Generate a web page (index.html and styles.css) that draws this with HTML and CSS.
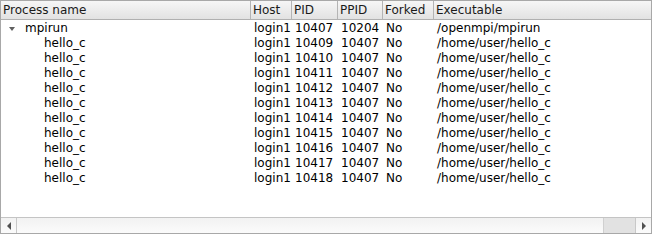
FILE: index.html
```html
<!DOCTYPE html>
<html>
<head>
<meta charset="utf-8">
<link rel="stylesheet" href="styles.css">
</head>
<body>
<div class="view">
  <div class="header">
    <div class="hcell c1">Process name</div>
    <div class="hcell c2">Host</div>
    <div class="hcell c3">PID</div>
    <div class="hcell c4">PPID</div>
    <div class="hcell c5">Forked</div>
    <div class="hcell c6">Executable</div>
  </div>
  <div class="body">
    <div class="row">
      <div class="cell c1"><span class="arrow"></span><span class="name">mpirun</span></div>
      <div class="cell c2">login1</div><div class="cell c3">10407</div><div class="cell c4">10204</div><div class="cell c5">No</div><div class="cell c6">/openmpi/mpirun</div>
    </div>
    <div class="row"><div class="cell c1 child">hello_c</div><div class="cell c2">login1</div><div class="cell c3">10409</div><div class="cell c4">10407</div><div class="cell c5">No</div><div class="cell c6">/home/user/hello_c</div></div>
    <div class="row"><div class="cell c1 child">hello_c</div><div class="cell c2">login1</div><div class="cell c3">10410</div><div class="cell c4">10407</div><div class="cell c5">No</div><div class="cell c6">/home/user/hello_c</div></div>
    <div class="row"><div class="cell c1 child">hello_c</div><div class="cell c2">login1</div><div class="cell c3">10411</div><div class="cell c4">10407</div><div class="cell c5">No</div><div class="cell c6">/home/user/hello_c</div></div>
    <div class="row"><div class="cell c1 child">hello_c</div><div class="cell c2">login1</div><div class="cell c3">10412</div><div class="cell c4">10407</div><div class="cell c5">No</div><div class="cell c6">/home/user/hello_c</div></div>
    <div class="row"><div class="cell c1 child">hello_c</div><div class="cell c2">login1</div><div class="cell c3">10413</div><div class="cell c4">10407</div><div class="cell c5">No</div><div class="cell c6">/home/user/hello_c</div></div>
    <div class="row"><div class="cell c1 child">hello_c</div><div class="cell c2">login1</div><div class="cell c3">10414</div><div class="cell c4">10407</div><div class="cell c5">No</div><div class="cell c6">/home/user/hello_c</div></div>
    <div class="row"><div class="cell c1 child">hello_c</div><div class="cell c2">login1</div><div class="cell c3">10415</div><div class="cell c4">10407</div><div class="cell c5">No</div><div class="cell c6">/home/user/hello_c</div></div>
    <div class="row"><div class="cell c1 child">hello_c</div><div class="cell c2">login1</div><div class="cell c3">10416</div><div class="cell c4">10407</div><div class="cell c5">No</div><div class="cell c6">/home/user/hello_c</div></div>
    <div class="row"><div class="cell c1 child">hello_c</div><div class="cell c2">login1</div><div class="cell c3">10417</div><div class="cell c4">10407</div><div class="cell c5">No</div><div class="cell c6">/home/user/hello_c</div></div>
    <div class="row"><div class="cell c1 child">hello_c</div><div class="cell c2">login1</div><div class="cell c3">10418</div><div class="cell c4">10407</div><div class="cell c5">No</div><div class="cell c6">/home/user/hello_c</div></div>
  </div>
  <div class="hscroll">
    <div class="sbtn left"><span class="tri-left"></span></div>
    <div class="track"><div class="thumb"></div></div>
    <div class="sbtn right"><span class="tri-right"></span></div>
  </div>
</div>
</body>
</html>
```

FILE: styles.css
```css
html, body { margin: 0; padding: 0; background: #ffffff; }
body { font-family: "DejaVu Sans", sans-serif; font-size: 12px; color: #000; }
.view {
  width: 652px; height: 234px; box-sizing: border-box;
  border: 1px solid #a8a8a8;
  display: flex; flex-direction: column; background: #fff;
}
.header {
  display: flex; height: 19px; box-sizing: border-box;
  background: linear-gradient(#f6f6f6, #e2e2e2);
  border-bottom: 1px solid #b0b0b0;
}
.hcell {
  box-sizing: border-box; padding-left: 2px; line-height: 18px;
  border-right: 1px solid #b4b4b4; white-space: nowrap; color: #1a1a1a;
}
.hcell.c6 { border-right: none; flex: 1; }
.c1 { width: 250px; }
.c2 { width: 41px; }
.c3 { width: 46px; }
.c4 { width: 45px; }
.c5 { width: 51px; }
.c6 { flex: 1; }
.body { flex: 1; padding-top: 1px; }
.row { display: flex; height: 15px; }
.cell { box-sizing: border-box; padding-left: 3px; line-height: 15px; white-space: nowrap; }
.hcell.c1 { padding-left: 2px; }
.cell.c1 { display: flex; align-items: center; padding-left: 8px; }
.cell.child { padding-left: 43px; display: block; }
.arrow {
  width: 0; height: 0; border-left: 3px solid transparent; border-right: 3px solid transparent;
  border-top: 4px solid #606060; margin-right: 10px; margin-top: 1px;
}
.hscroll {
  height: 16px; display: flex; box-sizing: border-box;
  border-top: 1px solid #c4c4c4; background: linear-gradient(#f2f2f2, #fbfbfb);
}
.sbtn { width: 15px; display: flex; align-items: center; justify-content: center; }
.sbtn.left { border-right: 1px solid #c8c8c8; }
.sbtn.right { border-left: 1px solid #c8c8c8; }
.track { flex: 1; display: flex; justify-content: flex-end; }
.thumb { width: 31px; background: #e2e2e2; border-left: 1px solid #d0d0d0; }
.tri-left { width: 0; height: 0; border-top: 4px solid transparent; border-bottom: 4px solid transparent; border-right: 4px solid #505050; }
.tri-right { width: 0; height: 0; border-top: 4px solid transparent; border-bottom: 4px solid transparent; border-left: 4px solid #505050; }
```
